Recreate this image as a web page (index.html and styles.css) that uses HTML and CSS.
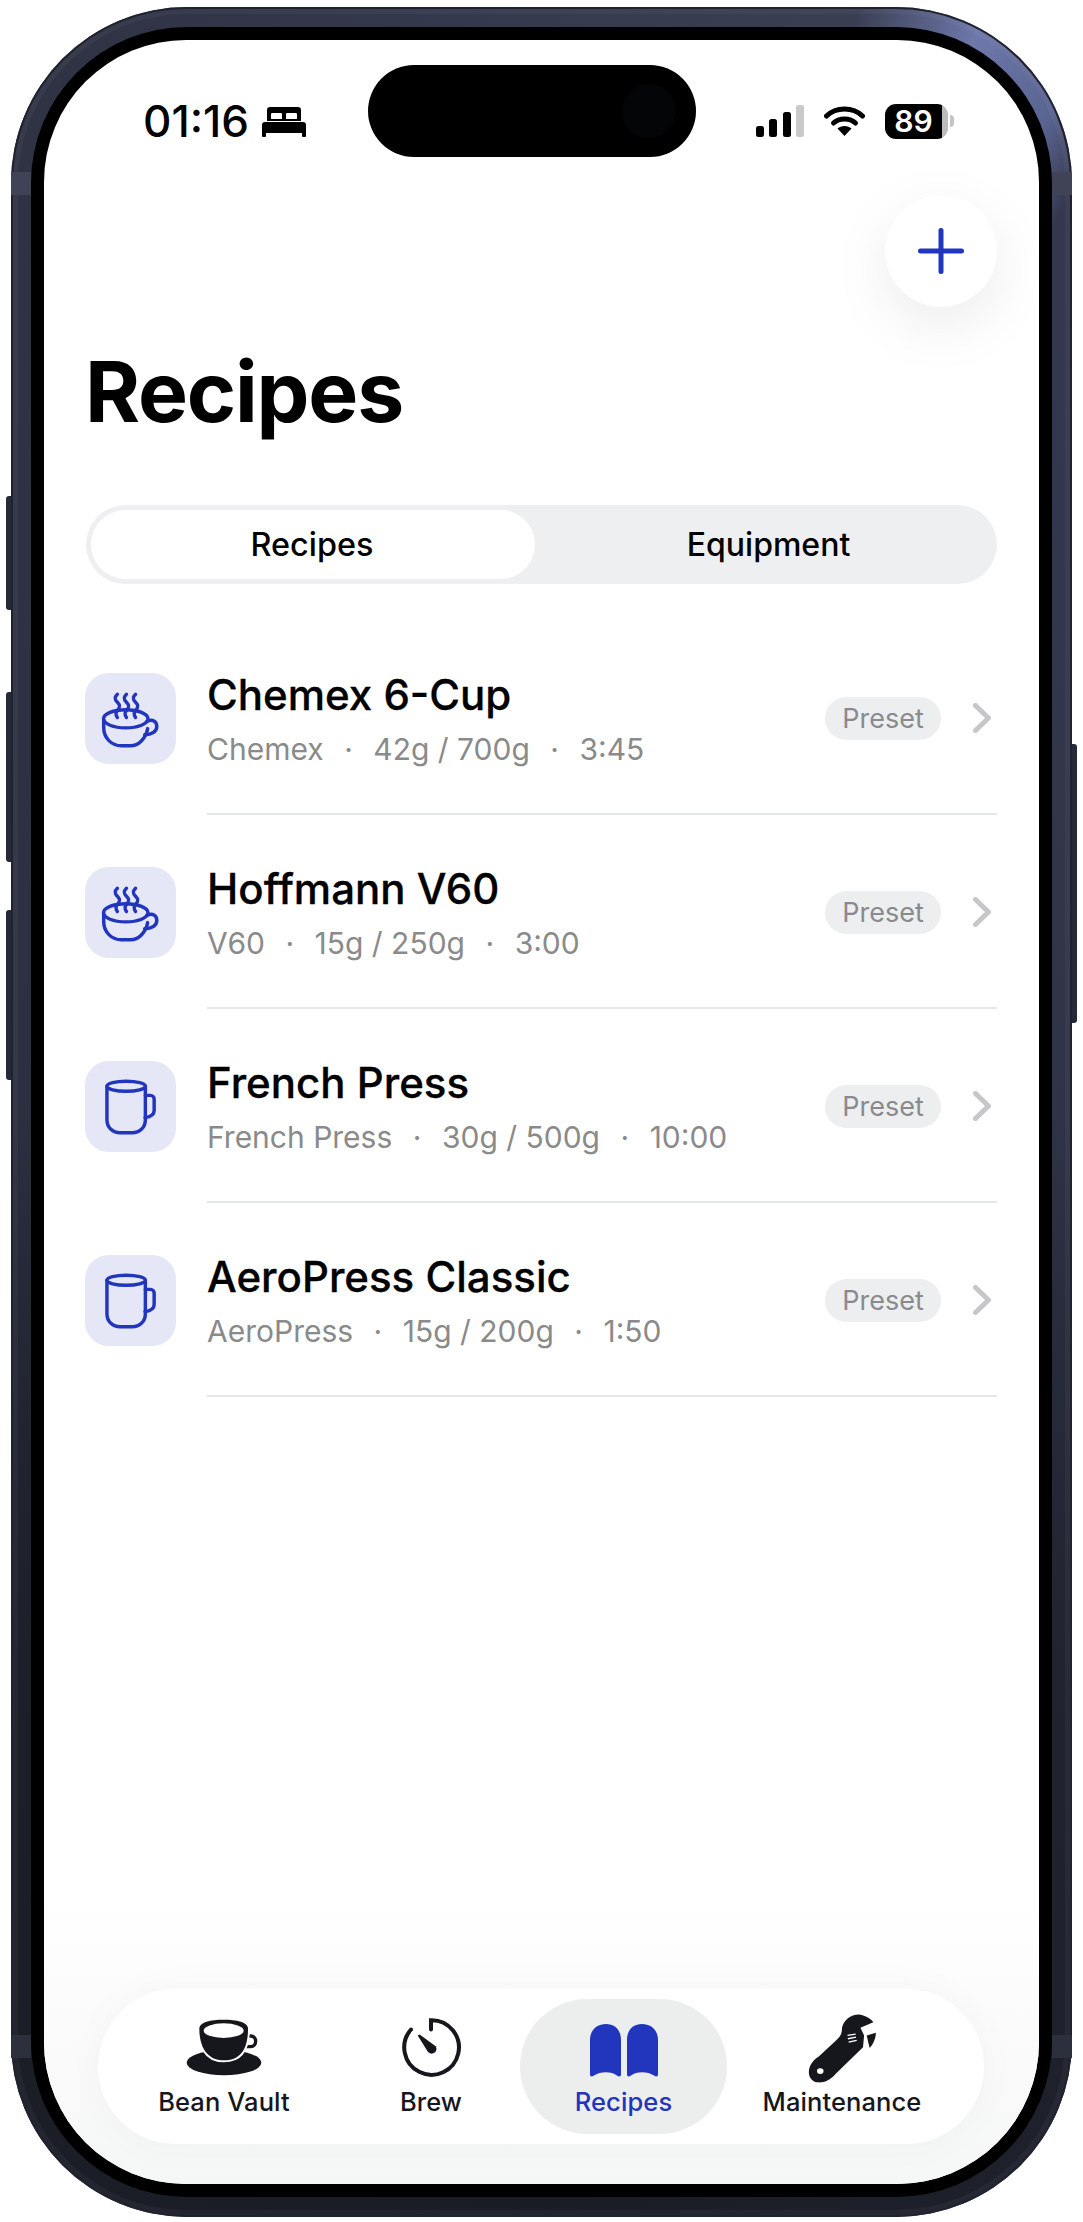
FILE: index.html
```html
<!DOCTYPE html>
<html lang="en">
<head>
  <meta charset="UTF-8">
  <title>Recipes</title>
  <link rel="stylesheet" href="styles.css">
</head>
<body>

  <svg class="defs" width="0" height="0">
    <symbol id="cupSteam" viewBox="0 0 90 90">
      <ellipse cx="40.3" cy="45.3" rx="22" ry="9"></ellipse>
      <path d="M18.5 46V54C18.5 65 27 72 36 72H45C53 72 60 65 62 55"></path>
      <path d="M61 48C67 45 71 48 71 53C71 58 66 61 59 61"></path>
      <path d="M32 21c-3 3-3 5 0 8s3 5 0 8c-2 2-2 4 0 7"></path>
      <path d="M41 21c-3 3-3 5 0 8s3 5 0 8c-2 2-2 4 0 7"></path>
      <path d="M50 21c-3 3-3 5 0 8s3 5 0 8c-2 2-2 4 0 7"></path>
    </symbol>
    <symbol id="mug" viewBox="0 0 90 90">
      <ellipse cx="40.7" cy="25" rx="19" ry="5"></ellipse>
      <path d="M21.7 25V58c0 8 6 13 13 13h12c7 0 13-5 13-13V25"></path>
      <path d="M59.7 34h5c2 0 3.7 1.5 3.7 3.7V49c0 3-2 6-9 7"></path>
    </symbol>
    <symbol id="chevron" viewBox="0 0 18 30">
      <path d="M2.5 2.5L15.5 15L2.5 27.5"></path>
    </symbol>
  </svg>

  <div class="phone">
    <span class="side side-a"></span>
    <span class="side side-b"></span>
    <span class="side side-c"></span>
    <span class="side side-d"></span>
    <span class="band band-tl"></span>
    <span class="band band-tr"></span>
    <span class="band band-bl"></span>
    <span class="band band-br"></span>

    <div class="bezel">
      <div class="screen">

        <!-- status bar -->
        <div class="status">
          <div class="status-left">
            <span class="time">01:16</span>
            <svg class="bed" viewBox="0 0 44 30">
              <path fill-rule="evenodd" d="M8 0H36C38 0 39 1 39 3V14H5V3C5 1 6 0 8 0ZM10 6C9 6 9 7 9 8V12H20V8C20 7 20 6 19 6ZM25 6C24 6 24 7 24 8V12H35V8C35 7 35 6 34 6Z"></path>
              <path d="M3 15H41C43 15 44 16 44 18V29C44 30 43 30 42 30C41 30 40 30 40 29V26H4V29C4 30 3 30 2 30C1 30 0 30 0 29V18C0 16 1 15 3 15Z"></path>
            </svg>
          </div>
          <div class="island"><span class="camera"></span></div>
          <div class="status-right">
            <svg class="signal" viewBox="0 0 48 32">
              <rect x="0" y="21" width="8" height="11" rx="2.5"></rect>
              <rect x="13" y="14" width="8" height="18" rx="2.5"></rect>
              <rect x="27" y="7" width="8" height="25" rx="2.5"></rect>
              <rect class="signal-off" x="40" y="0" width="8" height="32" rx="2.5"></rect>
            </svg>
            <svg class="wifi" viewBox="0 0 41 32">
              <path class="wifi-arc" d="M2.5 11C12 1.5 29 1.5 38.5 11"></path>
              <path class="wifi-arc" d="M9.5 18C15 12.5 26 12.5 31.5 18"></path>
              <path d="M20.5 31L13.5 23.5C17 20 24 20 27.5 23.5Z"></path>
            </svg>
            <div class="battery">
              <div class="battery-body">
                <span class="battery-fill">89</span>
                <span class="battery-empty"></span>
              </div>
              <span class="battery-cap"></span>
            </div>
          </div>
        </div>

        <div class="page">
          <div class="top-actions">
            <div class="add-btn">
              <svg width="46" height="46" viewBox="0 0 46 46">
                <path d="M23 2.5V43.5"></path>
                <path d="M2.5 23H43.5"></path>
              </svg>
            </div>
          </div>

          <h1 class="title">Recipes</h1>

          <div class="segment">
            <div class="segment-item segment-active">Recipes</div>
            <div class="segment-item">Equipment</div>
          </div>

          <!-- recipe list -->
          <div class="list">
            <div class="row">
              <div class="row-icon"><svg class="line-icon"><use href="#cupSteam"></use></svg></div>
              <div class="row-body">
                <div class="row-text">
                  <div class="row-title">Chemex 6-Cup</div>
                  <div class="row-sub"><span>Chemex</span><span>·</span><span>42g / 700g</span><span>·</span><span>3:45</span></div>
                </div>
                <span class="preset">Preset</span>
                <svg class="chevron"><use href="#chevron"></use></svg>
              </div>
            </div>
            <div class="row">
              <div class="row-icon"><svg class="line-icon"><use href="#cupSteam"></use></svg></div>
              <div class="row-body">
                <div class="row-text">
                  <div class="row-title">Hoffmann V60</div>
                  <div class="row-sub"><span>V60</span><span>·</span><span>15g / 250g</span><span>·</span><span>3:00</span></div>
                </div>
                <span class="preset">Preset</span>
                <svg class="chevron"><use href="#chevron"></use></svg>
              </div>
            </div>
            <div class="row">
              <div class="row-icon"><svg class="line-icon"><use href="#mug"></use></svg></div>
              <div class="row-body">
                <div class="row-text">
                  <div class="row-title">French Press</div>
                  <div class="row-sub"><span>French Press</span><span>·</span><span>30g / 500g</span><span>·</span><span>10:00</span></div>
                </div>
                <span class="preset">Preset</span>
                <svg class="chevron"><use href="#chevron"></use></svg>
              </div>
            </div>
            <div class="row">
              <div class="row-icon"><svg class="line-icon"><use href="#mug"></use></svg></div>
              <div class="row-body">
                <div class="row-text">
                  <div class="row-title">AeroPress Classic</div>
                  <div class="row-sub"><span>AeroPress</span><span>·</span><span>15g / 200g</span><span>·</span><span>1:50</span></div>
                </div>
                <span class="preset">Preset</span>
                <svg class="chevron"><use href="#chevron"></use></svg>
              </div>
            </div>
          </div>
        </div>

        <!-- bottom tabs -->
        <div class="tab-wrap">
          <div class="tabbar">
            <div class="tab tab-vault">
              <svg class="tab-icon" width="80" height="60" viewBox="310 175 240 180">
                <ellipse cx="430" cy="312" rx="112" ry="38"></ellipse>
                <path class="tab-stroke" d="M496 232h14c20 0 20 32 0 32h-18"></path>
                <path class="cup-body" d="M356 210C356 190 390 183 429 183C468 183 502 190 502 210C502 255 490 305 430 305C372 305 356 255 356 210Z"></path>
                <ellipse class="cup-milk" cx="429" cy="216" rx="60" ry="22"></ellipse>
              </svg>
              <span>Bean Vault</span>
            </div>
            <div class="tab tab-brew">
              <svg class="tab-icon" width="60" height="62" viewBox="960 175 180 185">
                <path class="tab-stroke timer" d="M1050 212V184A82 82 0 1 1 990 212"></path>
                <path d="M1010 230L1016 227L1064 262A14 14 0 1 1 1040 278Z"></path>
              </svg>
              <span>Brew</span>
            </div>
            <div class="tab tab-recipes">
              <svg class="tab-icon" width="68" height="54" viewBox="0 0 68 54">
                <path d="M0 16C0 6 7 0 16 0C25 0 31 6 31 16V50C31 53 29 53 27 51.5C22 47 10 47 4 51.5C2 53 0 53 0 50Z"></path>
                <path d="M37 16C37 6 43 0 52 0C61 0 68 6 68 16V50C68 53 66 53 64 51.5C58 47 46 47 41 51.5C39 53 37 53 37 50Z"></path>
              </svg>
              <span>Recipes</span>
            </div>
            <div class="tab tab-tools">
              <svg class="tab-icon" width="70" height="70" viewBox="830 160 190 212" preserveAspectRatio="none">
                <path d="M835 340C835 318 848 302 862 292L908 244C920 232 925 225 925 205C930 180 950 163 975 165C990 168 1005 178 1010 188L975 205L985 228L982 264L908 344C892 366 872 372 860 370C845 370 835 355 835 340Z"></path>
                <path d="M992 228L1017 220C1017 240 1007 258 1000 266Z"></path>
                <circle class="wrench-cut" cx="866" cy="336" r="9"></circle>
                <path class="wrench-lines" d="M940 228L962 224M941 238L963 233M943 248L965 243"></path>
              </svg>
              <span>Maintenance</span>
            </div>
          </div>
        </div>

      </div>
    </div>
  </div>

</body>
</html>
```

FILE: styles.css
```css
html,
body{
  margin: 0;
  padding: 0;
  background: #ffffff;
}

body{
  width: 1083px;
  height: 2222px;
  overflow: hidden;
  font-family: Inter, "Liberation Sans", sans-serif;
  color: #000000;
}

.defs{
  display: block;
  height: 0;
}

/* device */
.phone{
  position: relative;
  box-sizing: border-box;
  width: 1061px;
  height: 2210px;
  margin: 7px 0 0 11px;
  padding: 20px;
  border-radius: 176px;
  background: conic-gradient(#363a4e 0deg, #3a3e52 16deg, #6e78aa 22deg, #5a6490 27deg, #34384e 30deg, #2f3347 90deg, #20222e 140deg, #1a1c25 180deg, #1c1e28 220deg, #2b2f3f 270deg, #2f3344 335deg, #363a4e 360deg);
  box-shadow: inset 0 0 0 2px #20232f, inset 0 0 0 7px rgba(255,255,255,0.04);
}

.bezel{
  height: 100%;
  box-sizing: border-box;
  padding: 13px;
  background: #000000;
  border-radius: 156px;
}

.screen{
  height: 100%;
  display: flex;
  flex-direction: column;
  background: #ffffff;
  border-radius: 142px;
  overflow: hidden;
}

.side{
  position: absolute;
  background: #262938;
  width: 5px;
  left: -5px;
  border-radius: 3px 0 0 3px;
}
.side-a{ top: 489px; height: 114px; }
.side-b{ top: 685px; height: 170px; }
.side-c{ top: 903px; height: 170px; }
.side-d{
  top: 737px;
  height: 279px;
  left: auto;
  right: -5px;
  border-radius: 0 3px 3px 0;
}

.band{
  position: absolute;
  width: 20px;
  height: 23px;
  background: #3f4355;
}
.band-tl{ top: 165px; left: 0; }
.band-tr{ top: 165px; right: 0; }
.band-bl{ top: 2028px; left: 0; background: #2c2f3c; }
.band-br{ top: 2028px; right: 0; background: #2c2f3c; }

/* status bar */
.status{
  display: grid;
  grid-template-columns: 324px 1fr 324px;
  height: 92px;
  padding-top: 25px;
}

.status-left{
  display: flex;
  align-items: center;
  padding: 20px 0 0 99px;
  gap: 13px;
}

.time{
  font-size: 44px;
  font-weight: 500;
  line-height: 52px;
}

.bed{
  width: 44px;
  height: 30px;
  margin-top: 2px;
}

.island{
  display: flex;
  align-items: center;
  justify-content: flex-end;
  width: 328px;
  height: 92px;
  padding-right: 20px;
  box-sizing: border-box;
  background: #000000;
  border-radius: 46px;
}

.camera{
  width: 54px;
  height: 54px;
  border-radius: 50%;
  background: #040506;
}

.status-right{
  display: flex;
  align-items: center;
  padding: 20px 0 0 41px;
  gap: 16px;
}

.signal{
  width: 48px;
  height: 32px;
}
.signal-off{
  fill: #c9c9c9;
}

.wifi{
  width: 41px;
  height: 32px;
  margin-left: 4px;
}
.wifi-arc{
  fill: none;
  stroke: #000000;
  stroke-width: 5;
  stroke-linecap: round;
}

.battery{
  display: flex;
  align-items: center;
  gap: 2px;
  margin-left: 4px;
}

.battery-body{
  display: flex;
  width: 63px;
  height: 35px;
  border-radius: 11px;
  overflow: hidden;
}

.battery-fill{
  flex: 1;
  background: #000000;
  color: #ffffff;
  font-size: 30px;
  font-weight: 600;
  line-height: 35px;
  text-align: center;
}

.battery-empty{
  width: 6px;
  background: #bcbcbc;
}

.battery-cap{
  width: 4px;
  height: 12px;
  background: #c4c4c4;
  border-radius: 0 4px 4px 0;
}

/* page */
.page{
  flex: 1;
  padding: 0 42px;
}

.top-actions{
  display: flex;
  justify-content: flex-end;
  margin-top: 38px;
}

.add-btn{
  display: flex;
  align-items: center;
  justify-content: center;
  width: 112px;
  height: 112px;
  border-radius: 50%;
  background: #ffffff;
  box-shadow: 0 18px 60px rgba(0,0,0,0.08);
}

.add-btn svg{
  fill: none;
  stroke: #2135bd;
  stroke-width: 5;
  stroke-linecap: round;
}

.title{
  margin: 35px 0 0 -1px;
  font-size: 84px;
  font-weight: 700;
  line-height: 100px;
  letter-spacing: -1.2px;
}

.segment{
  display: flex;
  box-sizing: border-box;
  height: 79px;
  margin-top: 63px;
  padding: 5px;
  background: #eeeff0;
  border-radius: 40px;
}

.segment-item{
  flex: 1;
  padding-left: 10px;
  font-size: 32px;
  font-weight: 500;
  line-height: 69px;
  text-align: center;
}

.segment-active{
  flex: 0 0 442px;
  padding: 0 2px 0 0;
  background: #ffffff;
  border-radius: 35px;
  font-size: 32.4px;
}

.list{
  margin: 37px 0 0 -1px;
}

.row{
  display: flex;
  align-items: center;
  gap: 31px;
}

.row-icon{
  flex: 0 0 91px;
  height: 91px;
  background: #e5e6f6;
  border-radius: 24px;
}

.line-icon{
  display: block;
  width: 91px;
  height: 91px;
  fill: none;
  stroke: #2135bd;
  stroke-width: 3.4;
  stroke-linecap: round;
  stroke-linejoin: round;
}

.row-body{
  flex: 1;
  display: flex;
  align-items: center;
  height: 190px;
  padding: 2px 6px 0 0;
  border-bottom: 2px solid #e6e7e7;
}

.row-text{
  flex: 1;
}

.row-title{
  font-size: 42px;
  font-weight: 500;
  line-height: 54px;
  -webkit-text-stroke: 0.3px #000000;
}

.row-sub{
  display: flex;
  gap: 20.5px;
  margin-top: 7px;
  color: #8a8a8a;
  font-size: 30px;
  line-height: 40px;
}

.preset{
  box-sizing: border-box;
  width: 116px;
  height: 43px;
  background: #edeeef;
  border-radius: 22px;
  color: #8a8a8e;
  font-size: 27px;
  line-height: 43px;
  text-align: center;
}

.chevron{
  width: 18px;
  height: 30px;
  margin-left: 32px;
  fill: none;
  stroke: #c7c7c9;
  stroke-width: 5;
  stroke-linecap: round;
  stroke-linejoin: round;
}

/* tabs */
.tab-wrap{
  padding: 100px 55px 40px 54px;
  background: linear-gradient(to bottom, #ffffff, #f5f6f6);
}

.tabbar{
  display: flex;
  box-sizing: border-box;
  height: 155px;
  padding: 10px 0;
  background: #ffffff;
  border-radius: 78px;
  box-shadow: 0 0 40px rgba(0,0,0,0.03);
}

.tab{
  display: flex;
  flex-direction: column;
  align-items: center;
  height: 135px;
  color: #16171c;
  font-size: 25.5px;
  font-weight: 500;
  line-height: 32px;
  letter-spacing: 0.1px;
  white-space: nowrap;
}

.tab span{
  margin-top: auto;
  margin-bottom: 16px;
}

.tab-vault{ flex: 0 0 252px; }
.tab-brew{ flex: 0 0 162px; }
.tab-recipes{
  flex: 0 0 207px;
  margin-left: 8px;
  background: #eceded;
  border-radius: 68px;
  color: #2135bd;
}
.tab-tools{ flex: 0 0 230px; }

.tab-icon{
  flex: none;
  margin-top: 18px;
  fill: #16171c;
}
.tab-recipes .tab-icon{
  margin-top: 25px;
  fill: #2135bd;
}
.tab-tools .tab-icon{ margin-top: 14px; }

.tab-stroke{
  fill: none;
  stroke: #16171c;
  stroke-width: 10;
}
.timer{
  stroke-width: 12;
  stroke-linecap: round;
}

.cup-body{
  stroke: #ffffff;
  stroke-width: 12;
  paint-order: stroke;
}
.cup-milk{
  fill: #ffffff;
}

.wrench-cut{
  fill: #ffffff;
}
.wrench-lines{
  fill: none;
  stroke: #ffffff;
  stroke-width: 4;
}
```
